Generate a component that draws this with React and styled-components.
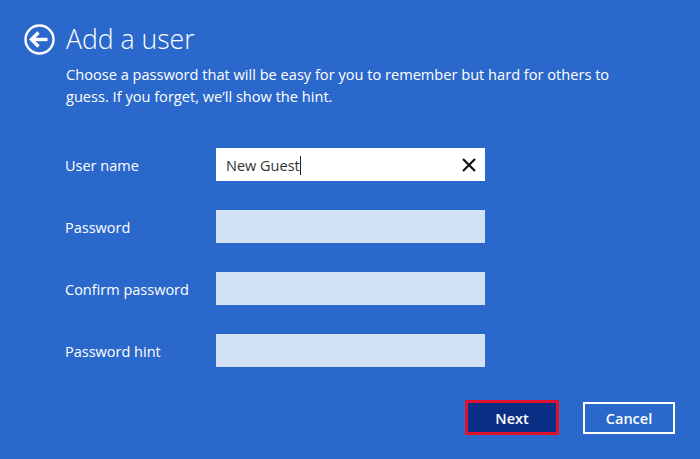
import styled, { createGlobalStyle } from "styled-components";

const GlobalStyle = createGlobalStyle`
  html, body {
    margin: 0;
    padding: 0;
    background: #2b68cb;
  }
`;

const Page = styled.div`
  width: 700px;
  height: 459px;
  box-sizing: border-box;
  padding: 24px 0 0 24px;
  background: #2b68cb;
  color: #fff;
  font-family: "Open Sans", "Noto Sans", sans-serif;
  overflow: hidden;
`;

const Header = styled.div`
  display: flex;
  align-items: center;
  gap: 11px;
  height: 30px;
`;

const BackButton = styled.button`
  width: 31px;
  height: 31px;
  padding: 0;
  border: none;
  background: none;
  display: block;
`;

const Title = styled.h1`
  margin: 0;
  font-size: 26.6px;
  font-weight: 300;
  line-height: 30px;
  white-space: nowrap;
`;

const Description = styled.p`
  margin: 9px 0 0 42px;
  width: 560px;
  font-size: 14.6px;
  line-height: 22px;
`;

const Form = styled.div`
  margin: 41px 0 0 41px;
  display: flex;
  flex-direction: column;
  gap: 29px;
`;

const Row = styled.div`
  display: flex;
  align-items: center;
  height: 33px;
`;

const Label = styled.label`
  width: 151px;
  padding-top: 1px;
  font-size: 14.5px;
`;

const Field = styled.div`
  width: 269px;
  height: 33px;
  box-sizing: border-box;
  display: flex;
  align-items: center;
  padding: 1px 9px 0 10px;
  background: ${props => (props.$active ? "#ffffff" : "#d3e1f5")};
  color: #333;
  font-size: 14.5px;
`;

const Caret = styled.span`
  width: 1px;
  height: 19px;
  background: #222;
`;

const ClearIcon = styled.svg`
  margin: -1px 0 0 auto;
  display: block;
`;

const Actions = styled.div`
  margin: 33px 0 0 441px;
  display: flex;
  align-items: center;
  gap: 24px;
`;

const Button = styled.button`
  width: ${props => (props.$primary ? "94px" : "92px")};
  height: ${props => (props.$primary ? "35px" : "32px")};
  box-sizing: border-box;
  padding: 1px 0 0;
  border: ${props => (props.$primary ? "3px solid #e0112b" : "2px solid #ffffff")};
  background: ${props => (props.$primary ? "#0a2f84" : "transparent")};
  color: #fff;
  font-family: inherit;
  font-size: 14.5px;
  font-weight: 600;
`;

const fields = [
  { label: "User name", value: "New Guest", active: true },
  { label: "Password" },
  { label: "Confirm password" },
  { label: "Password hint" },
];

export default function App() {
  return (
    <>
      <GlobalStyle />
      <Page>
        <Header>
          <BackButton aria-label="Back">
            <svg width="31" height="31" viewBox="0 0 31 31" fill="none">
              <circle cx="15.5" cy="15.5" r="14" stroke="#fff" strokeWidth="2.4" />
              <path d="M7.5 15.5H23.5" stroke="#fff" strokeWidth="3.4" />
              <path d="M14.5 8.5L7.5 15.5L14.5 22.5" stroke="#fff" strokeWidth="3.4" />
            </svg>
          </BackButton>
          <Title>Add a user</Title>
        </Header>
        <Description>
          Choose a password that will be easy for you to remember but hard for others to guess. If you forget, we’ll show the hint.
        </Description>
        <Form>
          {fields.map((field) => (
            <Row key={field.label}>
              <Label>{field.label}</Label>
              <Field $active={field.active}>
                {field.value}
                {field.active && <Caret />}
                {field.active && (
                  <ClearIcon width="14" height="14" viewBox="0 0 14 14" fill="none">
                    <path d="M1 1L13 13M13 1L1 13" stroke="#111" strokeWidth="2.2" />
                  </ClearIcon>
                )}
              </Field>
            </Row>
          ))}
        </Form>
        <Actions>
          <Button $primary>Next</Button>
          <Button>Cancel</Button>
        </Actions>
      </Page>
    </>
  );
}
